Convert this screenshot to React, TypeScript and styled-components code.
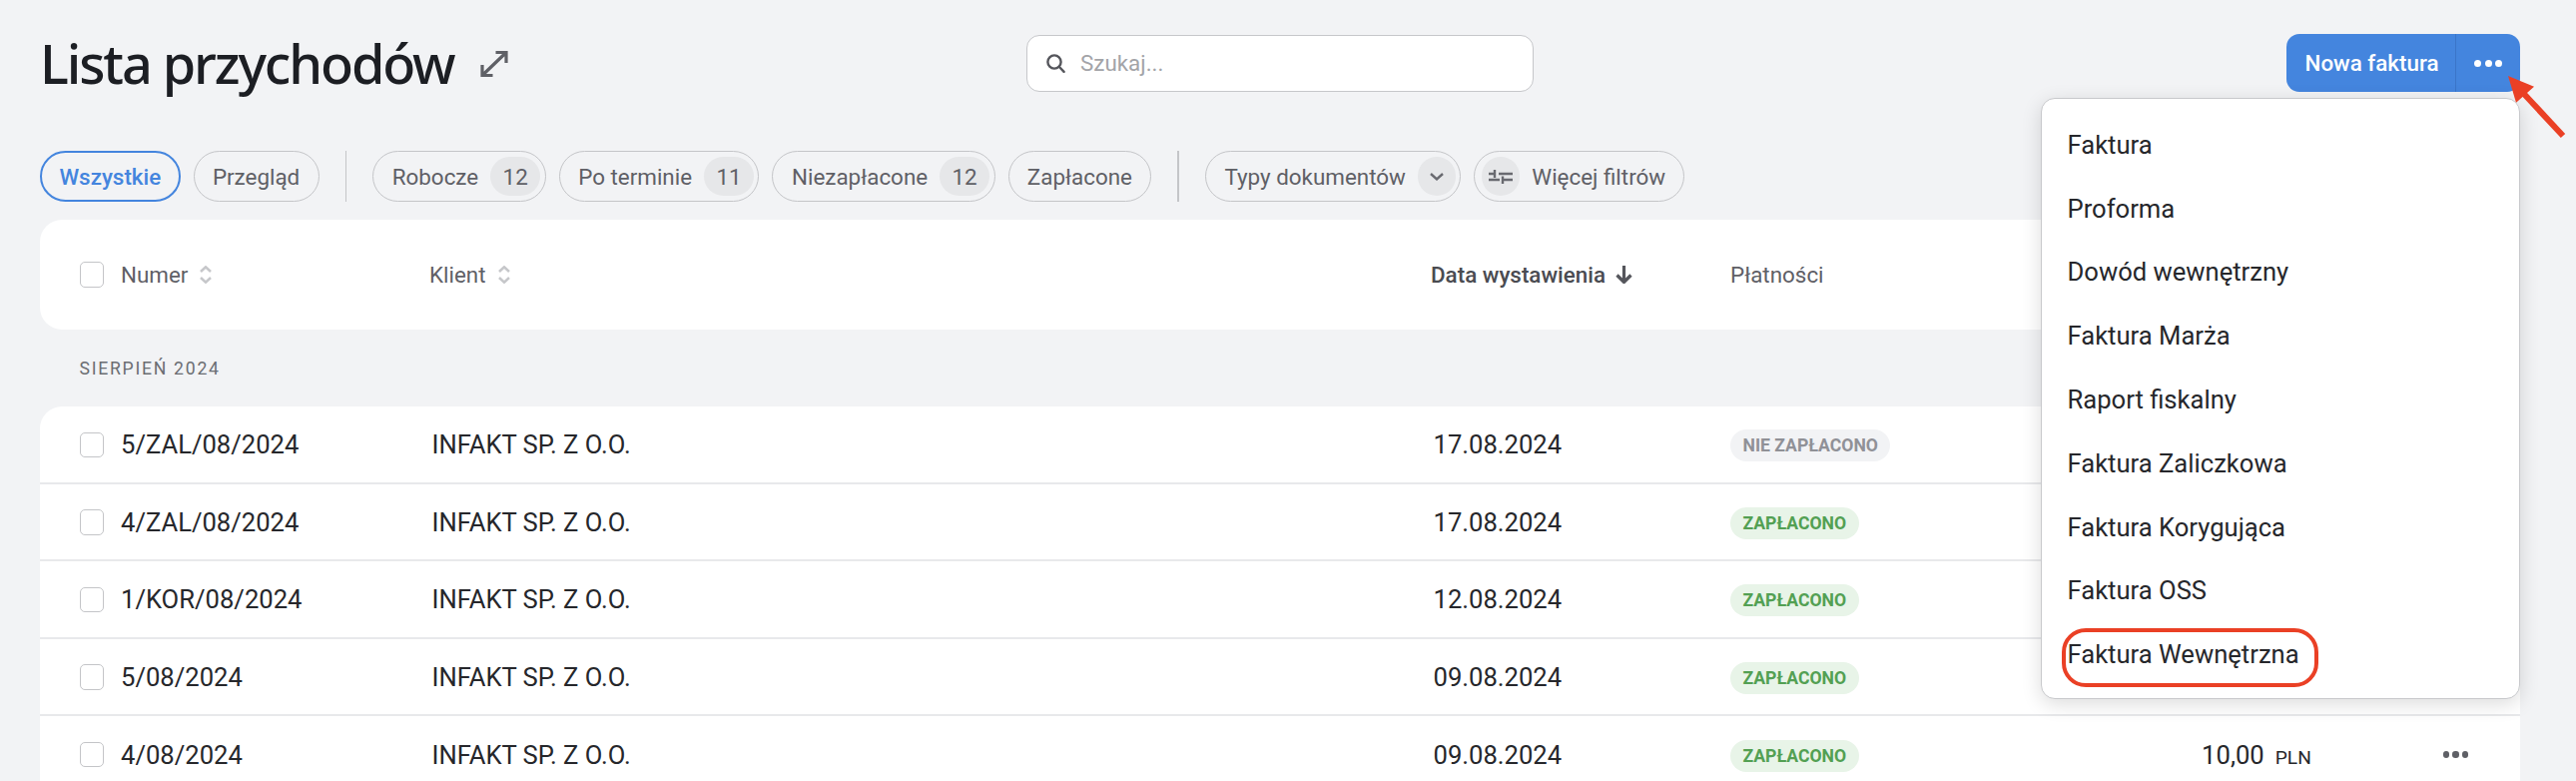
import React from "react";
import styled, { createGlobalStyle } from "styled-components";

const Global = createGlobalStyle`
  html, body { margin: 0; padding: 0; background: #f2f3f5; }
  * { box-sizing: border-box; }
  body { font-family: Roboto, "Liberation Sans", sans-serif; }
`;

const Page = styled.div`
  position: relative;
  width: 2580px;
  height: 782px;
  overflow: hidden;
  padding: 34px 56px 0 40px;
  background: #f2f3f5;
  color: #26272b;
  font-size: 22.4px;
`;

const Header = styled.header`
  display: grid;
  grid-template-columns: 1fr 508px 1fr;
  align-items: center;
  height: 58px;
`;

const TitleGroup = styled.div`
  display: flex;
  align-items: center;
  gap: 26px;
`;

const Title = styled.h1`
  margin: 0;
  font-family: "Noto Sans", sans-serif;
  font-weight: 500;
  font-size: 54px;
  line-height: 58px;
  letter-spacing: -2.1px;
  color: #1c1e23;
`;

const ExpandIcon = styled.svg`
  width: 28px;
  height: 28px;
  margin-top: 2px;
  fill: none;
  stroke: #5f6066;
  stroke-width: 3.2;
`;

const Search = styled.div`
  display: flex;
  align-items: center;
  gap: 15px;
  height: 57px;
  padding-left: 19px;
  background: #fff;
  border: 1.6px solid #c6c7ca;
  border-radius: 13px;
  color: #a3a4a8;
`;

const SearchIcon = styled.svg`
  width: 19px;
  height: 19px;
  fill: none;
  stroke: #55565c;
  stroke-width: 2.4;
  stroke-linecap: round;
`;

const ActionGroup = styled.div`
  display: flex;
  justify-content: flex-end;
`;

const SplitButton = styled.div`
  display: flex;
  width: 234px;
  height: 58px;
  background: #4485de;
  border-radius: 13px;
  color: #fff;
  font-weight: 500;
`;

const MainAction = styled.div`
  display: flex;
  align-items: center;
  justify-content: center;
  width: 170px;
  padding-left: 2px;
  border-right: 1.6px solid #3a75c8;
`;

const MoreAction = styled.div`
  flex: 1;
  display: flex;
  align-items: center;
  justify-content: center;
`;

const Dots = styled.span<{ $color: string; $small?: boolean }>`
  display: inline-flex;
  gap: ${(p) => (p.$small ? "3px" : "3.4px")};
  & > i {
    width: ${(p) => (p.$small ? "6.4px" : "7px")};
    height: ${(p) => (p.$small ? "6.4px" : "7px")};
    border-radius: 50%;
    background: ${(p) => p.$color};
  }
`;

const Filters = styled.nav`
  display: flex;
  align-items: center;
  gap: 13px;
  margin-top: 59px;
  height: 51px;
`;

const Chip = styled.div<{ $active?: boolean; $tail?: boolean; $lead?: boolean }>`
  display: flex;
  align-items: center;
  gap: 12px;
  height: 51px;
  padding: ${(p) =>
    p.$lead ? "0 18.2px 0 7px" : p.$tail ? "0 4.4px 0 18.6px" : p.$active ? "0 17.4px" : "0 18.3px"};
  border-radius: 26px;
  border: ${(p) => (p.$active ? "2.6px solid #4485de" : "1.6px solid #c4c5c8")};
  color: ${(p) => (p.$active ? "#4485de" : "#5f6066")};
  font-weight: ${(p) => (p.$active ? 500 : 400)};
  white-space: nowrap;
`;

const Count = styled.span<{ $wide?: boolean }>`
  display: flex;
  align-items: center;
  justify-content: center;
  width: ${(p) => (p.$wide ? "50px" : "38px")};
  height: 39px;
  border-radius: 20px;
  background: #e6e7e9;
  color: #5f6066;
`;

const Divider = styled.span`
  width: 1.6px;
  height: 51px;
  margin: 0 13px;
  background: #c4c5c8;
`;

const GlyphIcon = styled.svg`
  fill: none;
  stroke: #696a70;
  stroke-width: 2.4;
`;

const TableHead = styled.div`
  display: grid;
  grid-template-columns: 81px 309px 1003px 300px 1fr;
  align-items: center;
  height: 110px;
  margin-top: 18px;
  background: #fff;
  border-radius: 22px;
  color: #5f6066;
`;

const CheckCell = styled.div`
  padding-left: 39.5px;
  display: flex;
`;

const Check = styled.span`
  display: block;
  width: 24.6px;
  height: 25.6px;
  background: #fff;
  border: 1.6px solid #c4c5c8;
  border-radius: 5px;
`;

const HeadCell = styled.div<{ $strong?: boolean }>`
  display: flex;
  align-items: center;
  gap: ${(p) => (p.$strong ? "10px" : "12px")};
  font-weight: ${(p) => (p.$strong ? 500 : 400)};
  color: ${(p) => (p.$strong ? "#4a4b51" : "#5f6066")};
`;

const SortIcon = styled.svg`
  width: 12px;
  height: 18px;
  fill: none;
  stroke: #c6c7ca;
  stroke-width: 2.6;
`;

const ArrowIcon = styled.svg`
  width: 17px;
  height: 18px;
  fill: none;
  stroke: #55565c;
  stroke-width: 3.2;
`;

const SectionLabel = styled.div`
  height: 77px;
  padding: 29px 0 0 39.5px;
  font-size: 17.6px;
  line-height: 21px;
  letter-spacing: 1.75px;
  color: #6b6d72;
`;

const Rows = styled.div`
  background: #fff;
  border-radius: 22px 22px 0 0;
  font-size: 25.6px;
`;

const Row = styled.div`
  display: grid;
  grid-template-columns: 81px 310px 1002px 300px 200px 1fr;
  align-items: center;
  height: 77.6px;
  padding-top: 1px;
  border-bottom: 2px solid #e8e9eb;
`;

const ClientCell = styled.div`
  padding-left: 1.5px;
`;

const DateCell = styled.div`
  padding-left: 2.5px;
`;

const StatusBadge = styled.span<{ $paid: boolean }>`
  display: inline-flex;
  align-items: center;
  height: 32px;
  padding: 0 12.5px;
  border-radius: 16px;
  font-size: 17.6px;
  font-weight: 700;
  background: ${(p) => (p.$paid ? "#e8f4e8" : "#f2f3f5")};
  color: ${(p) => (p.$paid ? "#53a053" : "#909197")};
`;

const AmountCell = styled.div`
  display: flex;
  align-items: center;
  justify-content: flex-end;
  padding-right: 52px;
  gap: 132px;
`;

const Amount = styled.span`
  display: inline-flex;
  align-items: baseline;
  gap: 11px;
`;

const Currency = styled.span`
  font-size: 19.2px;
`;

const Menu = styled.div`
  position: absolute;
  top: 98px;
  left: 2044px;
  width: 480px;
  height: 602px;
  padding-top: 14px;
  background: #fff;
  border: 1.6px solid #c8c9cc;
  border-radius: 14px;
  box-shadow: 0 5px 20px rgba(0, 0, 0, 0.14);
`;

const MenuItem = styled.div`
  position: relative;
  display: flex;
  align-items: center;
  height: 63.8px;
  padding-left: 25.5px;
  font-size: 25.6px;
  color: #26272b;
`;

const Highlight = styled.span`
  position: absolute;
  left: 19.5px;
  top: 5.5px;
  width: 257.5px;
  height: 59px;
  border: 4.8px solid #ea4025;
  border-radius: 24px;
`;

const Pointer = styled.svg`
  position: absolute;
  left: 2505px;
  top: 70px;
  width: 70px;
  height: 72px;
`;

const rows = [
  { num: "5/ZAL/08/2024", date: "17.08.2024", paid: false },
  { num: "4/ZAL/08/2024", date: "17.08.2024", paid: true },
  { num: "1/KOR/08/2024", date: "12.08.2024", paid: true },
  { num: "5/08/2024", date: "09.08.2024", paid: true },
  { num: "4/08/2024", date: "09.08.2024", paid: true, amount: "10,00" },
];

const menu = [
  "Faktura",
  "Proforma",
  "Dowód wewnętrzny",
  "Faktura Marża",
  "Raport fiskalny",
  "Faktura Zaliczkowa",
  "Faktura Korygująca",
  "Faktura OSS",
  "Faktura Wewnętrzna",
];

const ThreeDots = ({ color, small }: { color: string; small?: boolean }) => (
  <Dots $color={color} $small={small}>
    <i />
    <i />
    <i />
  </Dots>
);

const Sort = () => (
  <SortIcon viewBox="0 0 12 18">
    <path d="M1 6l5-4.6L11 6M1 12l5 4.6L11 12" />
  </SortIcon>
);

export default function App() {
  return (
    <Page>
      <Global />
      <Header>
        <TitleGroup>
          <Title>Lista przychodów</Title>
          <ExpandIcon viewBox="0 0 28 28">
            <path d="M15.5 2.5H26V13M2 15v10.5h10.5M26 2.5L2 25.5" />
          </ExpandIcon>
        </TitleGroup>
        <Search>
          <SearchIcon viewBox="0 0 19 19">
            <circle cx="8" cy="8" r="6.6" />
            <path d="M13 13l4.6 4.8" />
          </SearchIcon>
          <span>Szukaj...</span>
        </Search>
        <ActionGroup>
          <SplitButton>
            <MainAction>Nowa faktura</MainAction>
            <MoreAction>
              <ThreeDots color="#fff" />
            </MoreAction>
          </SplitButton>
        </ActionGroup>
      </Header>

      <Filters>
        <Chip $active>Wszystkie</Chip>
        <Chip>Przegląd</Chip>
        <Divider />
        <Chip $tail>
          Robocze<Count $wide>12</Count>
        </Chip>
        <Chip $tail>
          Po terminie<Count $wide>11</Count>
        </Chip>
        <Chip $tail>
          Niezapłacone<Count $wide>12</Count>
        </Chip>
        <Chip>Zapłacone</Chip>
        <Divider />
        <Chip $tail>
          Typy dokumentów
          <Count>
            <GlyphIcon width="14" height="8" viewBox="0 0 14 8">
              <path d="M1 1l6 5.4L13 1" />
            </GlyphIcon>
          </Count>
        </Chip>
        <Chip $lead>
          <Count>
            <GlyphIcon width="24" height="16" viewBox="0 0 24 16">
              <path d="M0 5h5M6 1v8M10 5h14M0 11h11M14 7.5V15M14 11h10" />
            </GlyphIcon>
          </Count>
          Więcej filtrów
        </Chip>
      </Filters>

      <TableHead>
        <CheckCell>
          <Check />
        </CheckCell>
        <HeadCell>
          Numer <Sort />
        </HeadCell>
        <HeadCell>
          Klient <Sort />
        </HeadCell>
        <HeadCell $strong>
          Data wystawienia
          <ArrowIcon viewBox="0 0 17 18">
            <path d="M8.5 0v16M1.5 9.5l7 7 7-7" />
          </ArrowIcon>
        </HeadCell>
        <HeadCell>Płatności</HeadCell>
      </TableHead>
      <SectionLabel>SIERPIEŃ 2024</SectionLabel>

      <Rows>
        {rows.map((r) => (
          <Row key={r.num}>
            <CheckCell>
              <Check />
            </CheckCell>
            <div>{r.num}</div>
            <ClientCell>INFAKT SP. Z O.O.</ClientCell>
            <DateCell>{r.date}</DateCell>
            <div>
              <StatusBadge $paid={r.paid}>
                {r.paid ? "ZAPŁACONO" : "NIE ZAPŁACONO"}
              </StatusBadge>
            </div>
            <AmountCell>
              {r.amount && (
                <>
                  <Amount>
                    {r.amount} <Currency>PLN</Currency>
                  </Amount>
                  <ThreeDots color="#5f6066" small />
                </>
              )}
            </AmountCell>
          </Row>
        ))}
      </Rows>

      <Menu>
        {menu.map((m, i) => (
          <MenuItem key={m}>
            {m}
            {i === menu.length - 1 && <Highlight />}
          </MenuItem>
        ))}
      </Menu>

      <Pointer viewBox="0 0 70 72">
        <path d="M7 6L33 16.7L15 32.7Z" fill="#ea4025" />
        <path d="M22 23L62 66" stroke="#ea4025" strokeWidth="6" fill="none" />
      </Pointer>
    </Page>
  );
}
